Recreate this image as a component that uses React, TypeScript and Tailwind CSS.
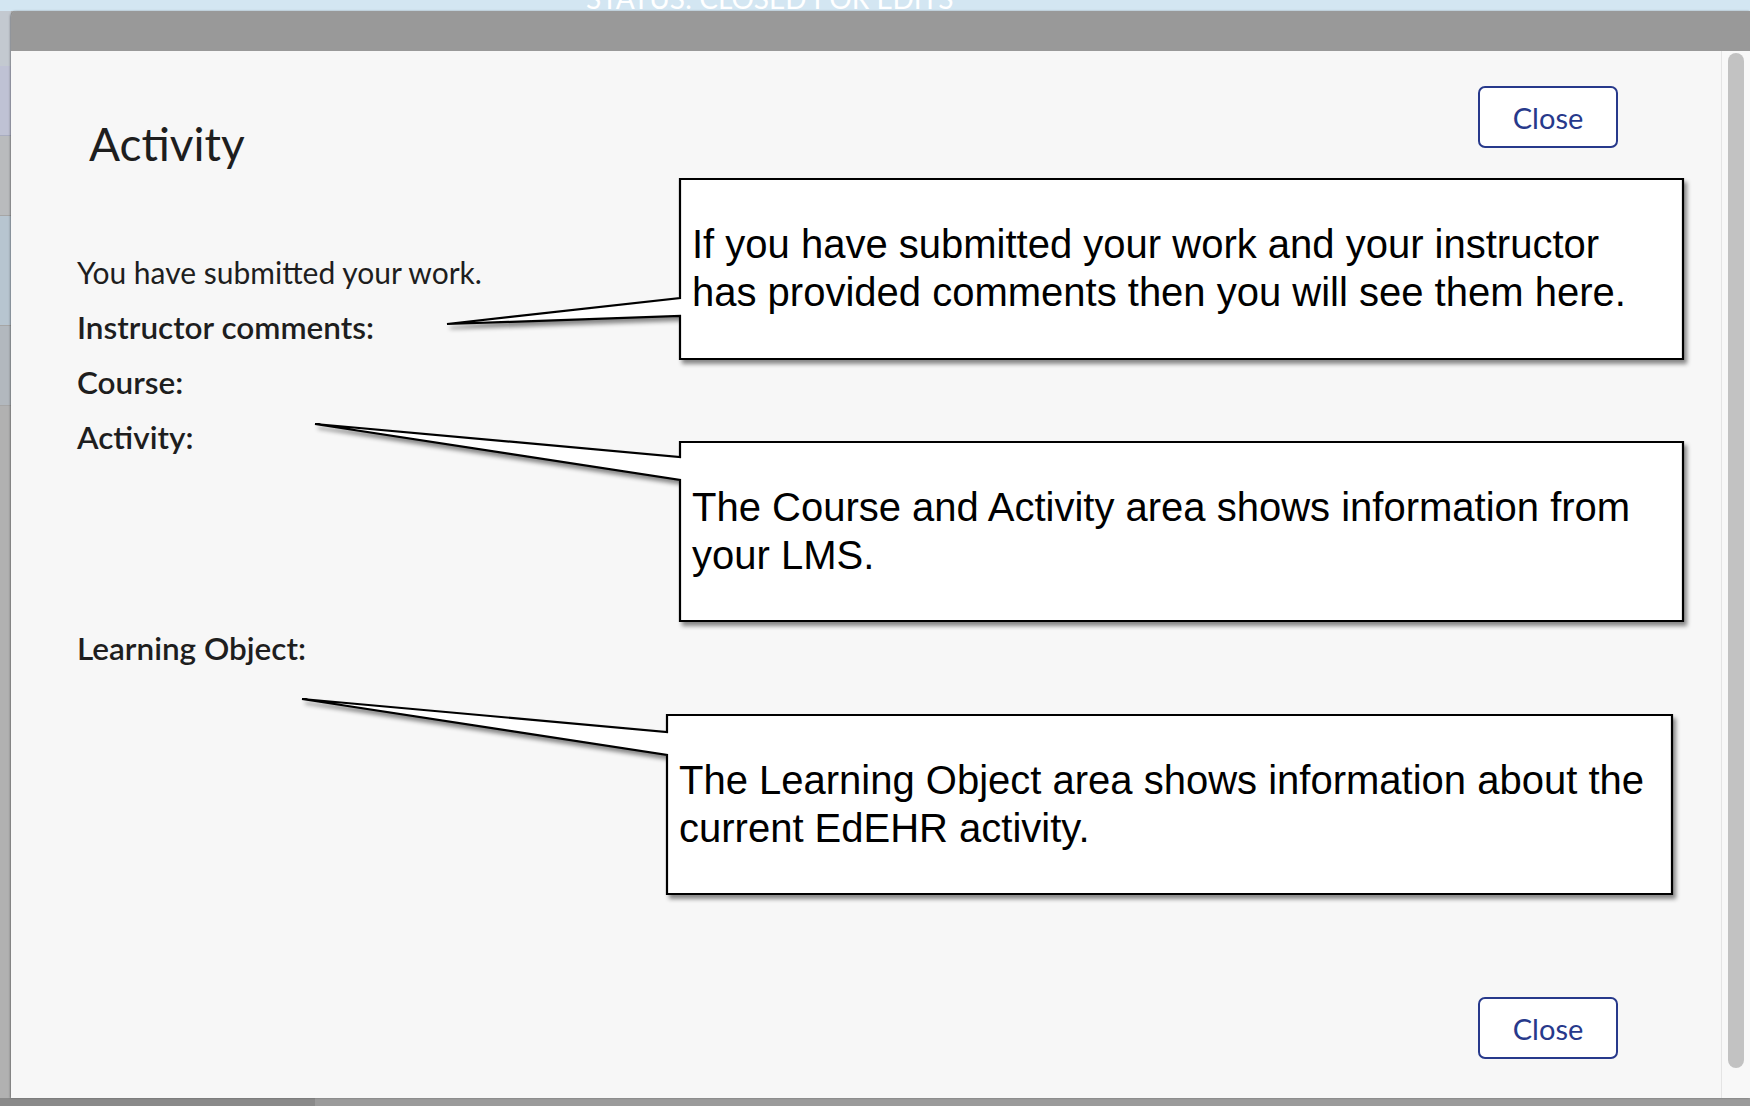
import React from "react";

const CloseButton = () => (
  <button className="w-[140px] h-[62px] rounded-[7px] border-2 border-[#27398b] bg-white text-[29px] leading-none text-[#27398b]">
    Close
  </button>
);

const calloutText =
  "absolute flex flex-col justify-center pl-[12px] font-['Liberation_Sans',Arial,sans-serif] text-[40px] leading-[48px] text-black whitespace-nowrap";

// page behind the modal, only a thin strip of it shows
const PageBehind = () => (
  <div className="flex h-full flex-col">
    <div className="h-[11px] overflow-hidden bg-[#d3e6f2] pl-[586px]">
      <div className="-mt-[16px] text-[28px] leading-[28px] text-white font-['Lato',sans-serif]">
        STATUS: CLOSED FOR EDITS
      </div>
    </div>
    <div className="flex flex-1 flex-col w-[11px]">
      <div className="h-[55px] bg-[#c3c9d0]" />
      <div className="h-[70px] bg-[#bfc2d4] border-b border-[#a9adc0]" />
      <div className="h-[80px] bg-[#b9bbbd] border-b border-[#a6a6a6]" />
      <div className="h-[110px] bg-[#b7c5d0] border-b border-[#a6a6a6]" />
      <div className="h-[80px] bg-[#b2b8be] border-b border-[#a6a6a6]" />
      <div className="flex-1 bg-[#b1b1b1]" />
    </div>
    <div className="flex h-[8px]">
      <div className="w-[315px] bg-[#8a8a8a]" />
      <div className="flex-1 bg-[#9b9b9b]" />
    </div>
  </div>
);

const Callouts = () => (
  <>
    <svg
      className="pointer-events-none absolute inset-0"
      width="1710"
      height="1047"
      viewBox="0 0 1710 1047"
    >
      <defs>
        <filter id="shade" x="-5%" y="-5%" width="110%" height="120%">
          <feDropShadow dx="3" dy="4" stdDeviation="2.2" floodColor="#000" floodOpacity="0.45" />
        </filter>
      </defs>
      <g fill="#fff" stroke="#000" strokeWidth="2.2" filter="url(#shade)">
        <path d="M669,128 H1672 V308 H669 V265 L436,273 L669,247 Z" />
        <path d="M669,391 H1672 V570 H669 V429 L304,373 L669,406 Z" />
        <path d="M656,664 H1661 V843 H656 V704 L291,648 L656,681 Z" />
      </g>
    </svg>
    <div className={`${calloutText} left-[669px] top-[127px] w-[1003px] h-[180px]`}>
      <span>If you have submitted your work and your instructor</span>
      <span>has provided comments then you will see them here.</span>
    </div>
    <div className={`${calloutText} left-[669px] top-[390px] w-[1003px] h-[179px]`}>
      <span>The Course and Activity area shows information from</span>
      <span>your LMS.</span>
    </div>
    <div className={`${calloutText} left-[656px] top-[663px] w-[1005px] h-[179px]`}>
      <span>The Learning Object area shows information about the</span>
      <span>current EdEHR activity.</span>
    </div>
  </>
);

export default function App() {
  return (
    <div className="relative h-[1106px] w-[1750px] overflow-hidden bg-[#b3b3b3] font-['Lato',sans-serif]">
      <PageBehind />

      <div className="absolute left-[11px] top-[11px] right-0 bottom-[8px] flex flex-col overflow-hidden rounded-tl-[6px] shadow-[-1px_0_2px_rgba(0,0,0,0.35)]">
        <div className="h-[40px] bg-[#999999]" />
        <div className="flex flex-1">
          <div className="relative flex flex-1 flex-col bg-[#f7f7f7] px-[66px] text-[#1e1e1e]">
            <div className="flex items-start justify-between pt-[35px] pr-[37px]">
              <h1 className="ml-[12px] mt-[30px] text-[46px] leading-[56px]">Activity</h1>
              <CloseButton />
            </div>

            <div className="mt-[73px] leading-[55px]">
              <div className="text-[30px]">You have submitted your work.</div>
              <div className="text-[31.5px] font-semibold">Instructor comments:</div>
              <div className="text-[31.5px] font-semibold">Course:</div>
              <div className="text-[31.5px] font-semibold">Activity:</div>
            </div>
            <div className="mt-[156px] text-[31.5px] leading-[55px] font-semibold">Learning Object:</div>

            <div className="mt-auto flex justify-end pb-[39px] pr-[37px]">
              <CloseButton />
            </div>

            <Callouts />
          </div>

          <div className="w-[29px] border-l border-[#e4e4e4] bg-[#f8f8f8] pt-[2px] pb-[30px] pl-[6px] pr-[6px]">
            <div className="h-full w-[16px] rounded-full bg-[#c2c2c2]" />
          </div>
        </div>
      </div>
    </div>
  );
}
